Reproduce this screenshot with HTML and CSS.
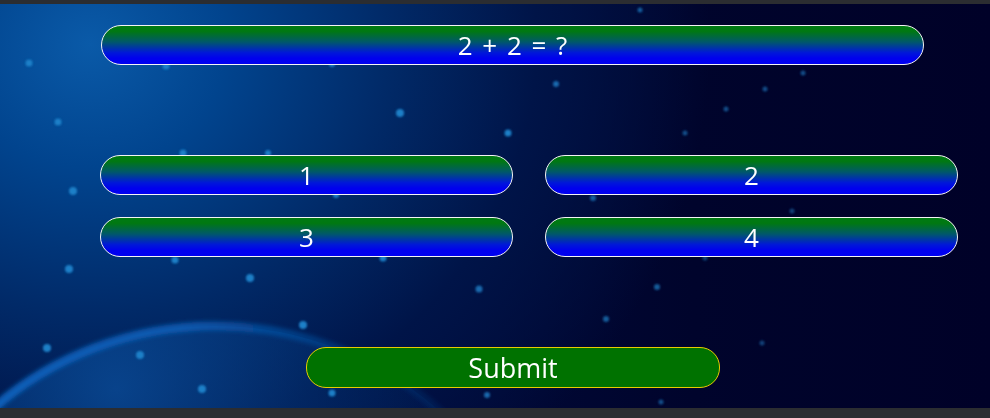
FILE: index.html
```html
<!DOCTYPE html>
<html>
<head>
<meta charset="utf-8">
<link rel="stylesheet" href="styles.css">
</head>
<body>
<div class="stage">
  <svg class="sky" width="990" height="404" viewBox="0 0 990 404">
    <defs>
      <filter id="blur" x="-50%" y="-50%" width="200%" height="200%"><feGaussianBlur stdDeviation="1.2"/></filter>
      <filter id="soft" x="-20%" y="-20%" width="140%" height="140%"><feGaussianBlur stdDeviation="2"/></filter>
      <radialGradient id="planet" cx="0.35" cy="0.1" r="0.6">
        <stop offset="0" stop-color="#0a4c98" stop-opacity="0.8"/>
        <stop offset="1" stop-color="#003070" stop-opacity="0"/>
      </radialGradient>
      <linearGradient id="rim" x1="0" y1="0" x2="1" y2="0">
        <stop offset="0" stop-color="#0a64c0" stop-opacity="1"/>
        <stop offset="0.45" stop-color="#0a5cb4" stop-opacity="0.9"/>
        <stop offset="0.75" stop-color="#0a50a0" stop-opacity="0.25"/>
        <stop offset="1" stop-color="#0a50a0" stop-opacity="0"/>
      </linearGradient>
    </defs>
    <ellipse cx="215" cy="640" rx="330" ry="318" fill="url(#planet)"/>
    <ellipse cx="215" cy="640" rx="330" ry="318" fill="none" stroke="url(#rim)" stroke-width="9" filter="url(#soft)"/>
    <g fill="#1f80c8" filter="url(#blur)">
      <circle cx="29" cy="59" r="3.5"/>
      <circle cx="58" cy="118" r="3.5"/>
      <circle cx="166" cy="62" r="3.5"/>
      <circle cx="332" cy="60" r="3"/>
      <circle cx="400" cy="109" r="4"/>
      <circle cx="508" cy="129" r="3.5"/>
      <circle cx="556" cy="80" r="3" opacity="0.8"/>
      <circle cx="803" cy="69" r="2.5" opacity="0.6"/>
      <circle cx="765" cy="85" r="2.5" opacity="0.6"/>
      <circle cx="726" cy="105" r="2.5" opacity="0.6"/>
      <circle cx="685" cy="129" r="2.5" opacity="0.6"/>
      <circle cx="640" cy="6" r="2.5" opacity="0.7"/>
      <circle cx="73" cy="187" r="4"/>
      <circle cx="69" cy="265" r="4"/>
      <circle cx="183" cy="149" r="3.5"/>
      <circle cx="268" cy="149" r="3"/>
      <circle cx="336" cy="191" r="3"/>
      <circle cx="175" cy="256" r="3.5"/>
      <circle cx="383" cy="254" r="3.5"/>
      <circle cx="593" cy="194" r="3" opacity="0.7"/>
      <circle cx="792" cy="207" r="2.5" opacity="0.5"/>
      <circle cx="705" cy="254" r="2.5" opacity="0.5"/>
      <circle cx="479" cy="285" r="3.5" opacity="0.8"/>
      <circle cx="657" cy="283" r="3" opacity="0.7"/>
      <circle cx="606" cy="315" r="3" opacity="0.7"/>
      <circle cx="762" cy="339" r="2.5" opacity="0.5"/>
      <circle cx="303" cy="321" r="4"/>
      <circle cx="250" cy="274" r="4"/>
      <circle cx="47" cy="344" r="4"/>
      <circle cx="140" cy="351" r="4"/>
      <circle cx="202" cy="385" r="4"/>
      <circle cx="332" cy="389" r="3.5"/>
      <circle cx="487" cy="391" r="3" opacity="0.8"/>
      <circle cx="661" cy="398" r="2.5" opacity="0.6"/>
    </g>
  </svg>

  <div class="content">
    <div class="question pill">2 + 2 = ?</div>
    <div class="answers">
      <button class="pill answer">1</button>
      <button class="pill answer">2</button>
      <button class="pill answer">3</button>
      <button class="pill answer">4</button>
    </div>
    <button class="submit">Submit</button>
  </div>
</div>
</body>
</html>
```

FILE: styles.css
```css
html, body {
  margin: 0;
  padding: 0;
}
body {
  background: #2b2d31;
  width: 990px;
  height: 418px;
  overflow: hidden;
  font-family: "Open Sans", "Noto Sans", "DejaVu Sans", sans-serif;
}
.stage {
  position: relative;
  margin-top: 4px;
  height: 404px;
  overflow: hidden;
  background:
    radial-gradient(ellipse 620px 560px at 90px 40px, #0a5aa8 0%, #01448e 22%, #012a68 48%, #001448 72%, rgba(0,6,48,0) 100%),
    linear-gradient(90deg, #001040 0%, #000a3a 40%, #00042c 70%, #000128 100%);
}
.sky {
  position: absolute;
  left: 0;
  top: 0;
}
.content {
  position: relative;
  display: flex;
  flex-direction: column;
  padding-top: 21px;
}
.pill {
  box-sizing: border-box;
  height: 40px;
  border: 1px solid #f4f4f4;
  border-radius: 20px;
  background: linear-gradient(180deg, #007a12 0%, #007812 14%, #00586a 42%, #0018d8 70%, #0000ee 85%, #0000f0 100%);
  color: #ffffff;
  font-family: inherit;
  font-size: 26px;
  display: flex;
  align-items: center;
  justify-content: center;
  padding: 0;
}
.question {
  margin-left: 101px;
  width: 823px;
  word-spacing: 3px;
}
.answers {
  margin-top: 90px;
  margin-left: 100px;
  width: 858px;
  display: grid;
  grid-template-columns: 413px 413px;
  column-gap: 32px;
  row-gap: 22px;
}
.submit {
  box-sizing: border-box;
  margin-top: 90px;
  margin-left: 306px;
  width: 414px;
  height: 41px;
  border: 1px solid #e8cc00;
  border-radius: 20px;
  background: #007200;
  color: #ffffff;
  font-family: inherit;
  font-size: 27px;
  padding: 0;
  display: flex;
  align-items: center;
  justify-content: center;
}
```
